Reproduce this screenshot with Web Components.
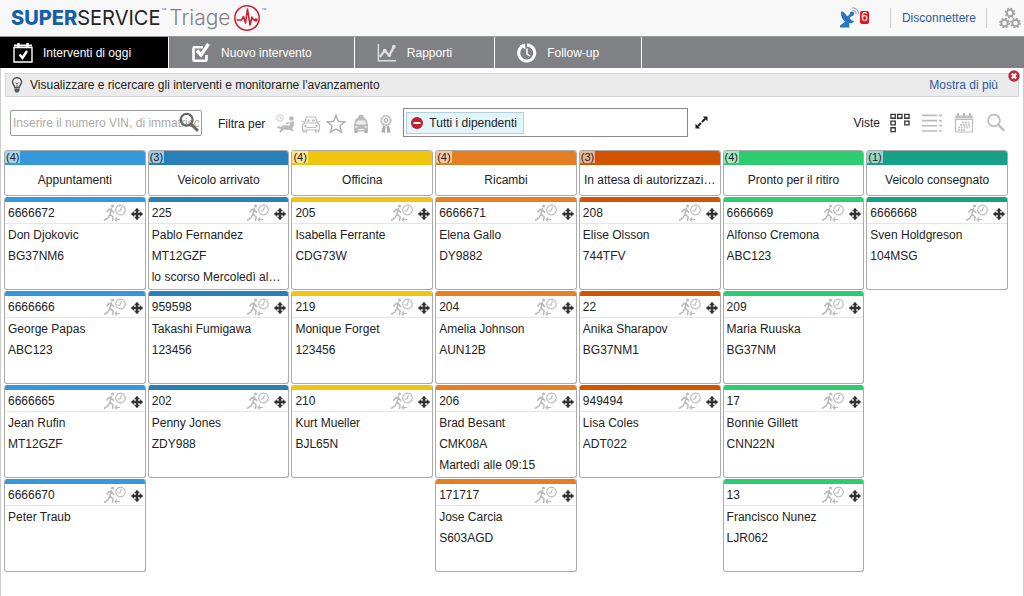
<!DOCTYPE html>
<html lang="it">
<head>
<meta charset="utf-8">
<meta name="viewport" content="width=device-width, initial-scale=1">
<title>Superservice Triage</title>
<style>
  body { margin: 0; background: #fff; color: #222; font: 12px/16px "Liberation Sans", Arial, sans-serif; }
</style>
</head>
<body>
<triage-app></triage-app>
<script>
const ICONS = {
  today: ['0 0 20 20', '<g fill="none" stroke="#fff"><path d="M1 4.5h18V19H1z" stroke-width="1.4"/><path d="M5.500 0v4M14.500 0v4" stroke-width="2.400"/><path d="M1 2.500h18" stroke-width="2"/><path d="M6.500 11.500l3 3.500 4.500-7" stroke-width="2.400"/></g>'],
  check: ['0 0 20 20', '<g fill="none" stroke="#fff" stroke-width="2.600"><path d="M12 4.300H3.500a1 1 0 0 0-1 1v11.400a1 1 0 0 0 1 1h11a1 1 0 0 0 1-1V12"/><path d="M6 7.500l4 4.500L17.500 1" stroke-width="3.400"/></g>'],
  chart: ['0 0 22 20', '<g fill="none" stroke="#ddd"><path d="M1.500 0v18.500H21" stroke-width="1.600"/><path d="M3 14.500l5.500-7 5 5 5-9" stroke-width="2.600"/></g><g fill="#ddd"><circle cx="8.500" cy="7.500" r="2.200"/><circle cx="13.500" cy="12.500" r="2"/><circle cx="18.500" cy="3" r="2.200"/></g>'],
  history: ['0 0 20 20', '<path d="M4.500 3.900A8 8 0 1 0 10 2" fill="none" stroke="#fff" stroke-width="3"/><path d="M2.500 2.500L8 .500l.500 6z" fill="#fff"/><path d="M10 5.500v5.500l3 2" fill="none" stroke="#fff" stroke-width="1.500"/>'],
  bulb: ['0 0 12 16', '<path d="M3.800 10.500C3.800 8.500 1.500 7.800 1.500 5a4.500 4.300 0 0 1 9 0c0 2.800-2.300 3.500-2.300 5.500z" fill="#eee" stroke="#555" stroke-width="1.500"/><path d="M4.500 5.500L6 7l1.500-1.500M6 7v3" fill="none" stroke="#777"/><path d="M3.500 11.500h5v2.500L7 15.500H5L3.500 14z" fill="#555"/>'],
  search: ['0 0 20 20', '<circle cx="7.700" cy="7.700" r="5.900" fill="none" stroke="currentColor" stroke-width="2.200"/><path d="M12.200 12.200l5.800 5.800" stroke="currentColor" stroke-width="3" stroke-linecap="round"/>'],
  find: ['0 0 20 20', '<circle cx="8" cy="7.500" r="5.900" fill="none" stroke="currentColor" stroke-width="1.700"/><path d="M12.500 12l5 5" stroke="currentColor" stroke-width="2.400" stroke-linecap="round"/>'],
  waiting: ['0 0 20 20', '<g fill="none" stroke="#bbb"><circle cx="4" cy="4" r="3.300" stroke="#ccc"/><path d="M4 2v2.300h2" stroke="#ccc"/><path d="M16 7.500c.500 3-.500 5.500-3 6.200L9 13" stroke-width="4"/><path d="M1.500 13l3.500 1 3-2 3 2.500M4 18l3-3.500 8 .500 2 2" stroke-width="2"/><path d="M9.500 9.500l4-.500" stroke-width="1.500"/></g><circle cx="15.500" cy="4.500" r="2.200" fill="#b5b5b5"/>'],
  car: ['0 0 20 20', '<g fill="none" stroke="#bbb" stroke-width="1.200"><path d="M3.500 9l2-6h9l2 6 2 2v5h-17v-5z"/><path d="M3.500 9h13M5.500 13.500h9M2.500 16v2h3V16M14.500 16v2h3V16M.500 7.500l3 .500M19.500 7.500l-3 .500"/></g><g fill="#bbb"><circle cx="4.500" cy="12" r="1.200"/><circle cx="15.500" cy="12" r="1.200"/><circle cx="7.500" cy="6.500" r="1.300"/><circle cx="12.500" cy="6.500" r="1.300"/></g>'],
  star: ['0 0 20 20', '<path d="M10 1.500l2.400 5.900 6.400.5-4.900 4.100 1.600 6.300L10 15l-5.500 3.300 1.600-6.300-4.900-4.100 6.400-.5z" fill="none" stroke="#aaa" stroke-width="1.400"/>'],
  taxi: ['0 0 20 20', '<path d="M7 3.500L8 1h4l1 2.500 2.500 2L17 11v6.500H3V11l1.500-5.500z" fill="#bbb"/><path d="M6 6.500h8l1 4H5z" fill="#eee"/><path d="M4 13h2.500M13.500 13H16M7 15.500h6" stroke="#fff" stroke-width="1.200"/><path d="M3.500 17h3v2h-3zM13.500 17h3v2h-3z" fill="#aaa"/>'],
  rosette: ['0 0 20 20', '<circle cx="10" cy="6.500" r="4.700" fill="none" stroke="#bbb" stroke-width="1.800" stroke-dasharray="2.600 .4"/><circle cx="10" cy="6.500" r="1.800" fill="none" stroke="#b0b0b0" stroke-width="1.300"/><path d="M7 11.500l2.500 1-.7 7-1.800-1.500-1.800 1zM13 11.500l-2.500 1 .7 7 1.800-1.500 1.800 1z" fill="#aaa"/>'],
  minus: ['0 0 12 12', '<circle cx="6" cy="6" r="6" fill="#c1202f"/><path d="M2.500 6h7" stroke="#fff" stroke-width="2"/>'],
  close: ['0 0 12 12', '<circle cx="6" cy="6" r="5.700" fill="#c1273a"/><path d="M3.800 3.500l4.400 5M8.200 3.500l-4.400 5" stroke="#fff" stroke-width="1.900"/>'],
  expand: ['0 0 14 14', '<path d="M13.500.500v5.200L8.300.500zM.500 13.500V8.300l5.200 5.200z" fill="#222"/><path d="M3 11l8-8" stroke="#222" stroke-width="2.200" stroke-dasharray="4.900 1.500"/>'],
  board: ['0 0 21 20', '<path d="M1 1h4.500v4H1zM8 1h4.500v4H8zM15.500 1H20v4h-4.500zM1 8h4.500v4H1zM15.500 8H20v4h-4.500zM1 15h4.500v4H1z" fill="none" stroke="#333" stroke-width="1.400"/>'],
  list: ['0 0 21 20', '<path d="M0 2h16M0 7.500h16M0 13h16M0 18.500h16M18 2h3M18 7.500h3M18 13h3M18 18.500h3" stroke="#bbb" stroke-width="1.600"/>'],
  month: ['0 0 20 20', '<path d="M1.500 6.500h17V19h-17z" fill="none" stroke="#bbb" stroke-width="1.200"/><path d="M1 2.500h18v3H1z" fill="#c4c4c4"/><path d="M4 0v4M10 0v4M16 0v4" stroke="#bbb" stroke-width="2"/><path d="M8 9.500h8M6 12h10M4 14.500h12M4 17h8" stroke="#ccc" stroke-width="1.800" stroke-dasharray="2 .7"/>'],
  gears: ['0 0 24 22', '<g fill="none" stroke="#a5a5a5"><g stroke-width="2"><circle cx="12" cy="6" r="3.200"/><circle cx="6.500" cy="16" r="3.200"/><circle cx="17.500" cy="16" r="3.200"/></g><g stroke-width="1.500" stroke-dasharray="1.900 1.700"><circle cx="12" cy="6" r="4.600"/><circle cx="6.500" cy="16" r="4.600"/><circle cx="17.500" cy="16" r="4.600"/></g></g>'],
  dish: ['0 0 22 22', '<path d="M2 4.500c3 0 3.500 1.500 5.500 4l2 2 3.500 3 2.500 1c-2 2-5 2.200-7.500 1.200C4 14 1.500 9.500 2 4.500z" fill="#2677bd"/><path d="M7 14L1 18.500v2h9.500L10 15z" fill="#2677bd"/><path d="M8.500 11l4.500-4" stroke="#2677bd" stroke-width="2.600"/><circle cx="13" cy="6.800" r="2.200" fill="#2677bd"/><path d="M13.500 3.500A3.500 3.500 0 0 1 17 7M13.500.800A6 6 0 0 1 19.700 7" fill="none" stroke="#8fa9c2" stroke-width="1.200"/>'],
  pulse: ['0 0 28 28', '<circle cx="14" cy="14" r="12.200" fill="none" stroke="#c8202f" stroke-width="1.500"/><path d="M3.500 16h5l2-3.500 2 6.500 2-14 2.500 16 2-8 1.500 3h3" fill="none" stroke="#c8202f" stroke-width="1.600" stroke-linejoin="round"/><circle cx="23" cy="16" r="1.700" fill="#c8202f"/>'],
  runner: ['0 0 24 18', '<g fill="none" stroke="#bbb"><path d="M8.500 4L7 10l3 3-.500 4M7 10l-2 4-4 2.500M3.500 8.500l2.500-3 2.500.500 2.500 3" stroke-width="1.600"/><circle cx="17.500" cy="6" r="4.800" stroke-width="1.200"/><path d="M18.500 3l-1.500 4h-2.500" stroke-width="1.100"/><path d="M12 15.500h5M14 13.500l-2 2 2 2" stroke-width="1.100"/></g><circle cx="9.500" cy="2" r="1.600" fill="#bbb"/>'],
  move: ['0 0 12 12', '<path d="M6 0l2.500 3H7v2h2V3.500L12 6 9 8.500V7H7v2h1.500L6 12 3.500 9H5V7H3v1.500L0 6l3-2.500V5h2V3H3.500z" fill="#333" stroke="#333" stroke-width=".4"/>']
};

const SHARED = `
  * { box-sizing: border-box; }
  button { font: inherit; color: inherit; padding: 0; margin: 0; border: 0; background: none; display: flex; cursor: pointer; }
  input { font: inherit; margin: 0; }
  a { color: #2a5c9e; text-decoration: none; }
`;

class Base extends HTMLElement {
  connectedCallback() {
    if (this.shadowRoot) return;
    this.attachShadow({ mode: 'open' }).innerHTML = `<style>${SHARED}</style>` + this.render();
  }
}

customElements.define('t-icon', class extends Base {
  render() {
    const [box, art] = ICONS[this.getAttribute('name')];
    return `<style>:host{display:block;flex:none;width:20px;height:20px} svg{display:block;width:100%;height:100%}</style>
      <svg viewBox="${box}" aria-hidden="true">${art}</svg>`;
  }
});

customElements.define('triage-header', class extends Base {
  render() {
    return `<style>
      :host { display: flex; align-items: center; height: 36px; padding: 0 2px 0 11px; background: #f8f8f8; }
      .logo { display: flex; align-items: center; font: 20px/36px Inter, sans-serif; color: #222; }
      b { color: #1760a8; font-weight: 800; }
      small { font-size: 8px; line-height: 8px; align-self: flex-start; padding: 7px 3px 0 1px; color: #777; }
      .name { color: #808285; font-weight: 300; font-size: 21px; }
      .pulse { width: 28px; height: 28px; margin-left: 2px; }
      nav { display: flex; align-items: center; margin-left: auto; }
      .alerts { position: relative; padding-right: 8px; }
      .alerts t-icon { width: 22px; height: 22px; }
      .badge { position: absolute; right: 0; top: 4px; padding: 0 1px; font-size: 12px; line-height: 13px; color: #fff; background: #e8101c; border-radius: 2px; }
      .out { margin: 0 11px 0 21px; padding: 2px 10px 2px 11px; border: solid #ccc; border-width: 0 1px; }
      .gears { width: 24px; height: 22px; }
    </style>
    <div class="logo"><b>SUPER</b><span>SERVICE</span><small>™</small><span class="name">Triage</span><t-icon class="pulse" name="pulse"></t-icon><small>™</small></div>
    <nav>
      <button class="alerts" aria-label="Notifiche"><t-icon name="dish"></t-icon><span class="badge">6</span></button>
      <span class="out"><a href="#">Disconnettere</a></span>
      <button aria-label="Impostazioni"><t-icon class="gears" name="gears"></t-icon></button>
    </nav>`;
  }
});

customElements.define('triage-tabs', class extends Base {
  render() {
    const tabs = [['today', 'Interventi di oggi'], ['check', 'Nuovo intervento'], ['chart', 'Rapporti'], ['history', 'Follow-up']];
    return `<style>
      :host { display: block; background: #808184; border-top: 1px solid #999; }
      nav { display: flex; }
      a { display: flex; align-items: center; gap: 10px; height: 31px; padding: 0 42px 0 22px; color: #fff; border-right: 1px solid #fff; }
      a[aria-current] { background: #000; padding: 0 37px 0 13px; }
    </style><nav>${tabs.map(([i, t], n) => `<a href="#"${n ? '' : ' aria-current="page"'}><t-icon name="${i}"></t-icon><span>${t}</span></a>`).join('')}</nav>`;
  }
});

customElements.define('triage-hint', class extends Base {
  render() {
    return `<style>
      :host { position: relative; display: flex; align-items: center; gap: 7px; height: 24px; margin: 5px 4px 0; padding: 0 20px 0 5px; background: #ebebeb; border: 1px solid #d4d4d4; }
      .bulb { width: 12px; height: 16px; }
      a { margin-left: auto; }
      .close { position: absolute; right: -2px; top: -4px; }
      .close t-icon { width: 12px; height: 12px; }
    </style>
    <t-icon class="bulb" name="bulb"></t-icon><slot></slot><a href="#">Mostra di più</a>
    <button class="close" aria-label="Chiudi"><t-icon name="close"></t-icon></button>`;
  }
});

customElements.define('triage-toolbar', class extends Base {
  render() {
    const filters = [['waiting', 'In attesa'], ['car', 'Auto sostitutiva'], ['star', 'Preferiti'], ['taxi', 'Taxi'], ['rosette', 'Garanzia']];
    const views = [['board', 'Schede'], ['list', 'Elenco'], ['month', 'Calendario'], ['find', 'Cerca']];
    return `<style>
      :host { display: flex; align-items: center; padding: 11px 17px 13px 9px; }
      .search { position: relative; flex: 0 1 192px; }
      .search input { display: block; width: 100%; height: 26px; padding: 0 2px; border: 1px solid #999; border-radius: 2px; background: #fff; }
      .search input::placeholder { color: #aaa; opacity: 1; }
      .search button { position: absolute; right: 3px; top: 2px; color: #666; }
      .label { margin: 2px 11px 0 16px; white-space: nowrap; }
      .filters { display: flex; gap: 5px; padding-top: 2px; }
      .staff { display: flex; align-items: center; flex: 0 1 285px; min-width: 150px; height: 29px; margin: 0 7px; padding: 0 2px; border: 1px solid #888; }
      .chip { display: flex; align-items: center; gap: 6px; flex: none; height: 22px; padding: 0 6px 0 4px; background: #e2f4fc; border: 1px solid #b5cfdc; }
      .chip t-icon { width: 12px; height: 12px; }
      .staff input { flex: 1; min-width: 0; border: 0; outline: 0; }
      .expand { width: 13px; height: 13px; }
      .views { display: flex; align-items: center; gap: 12px; margin-left: auto; color: #bbb; }
      .views span { color: #222; margin-right: -2px; }
    </style>
    <div class="search"><input id="q" type="text" aria-label="Cerca" placeholder="Inserire il numero VIN, di immatricolazione"><button aria-label="Cerca"><t-icon name="search"></t-icon></button></div>
    <span class="label">Filtra per</span>
    <div class="filters">${filters.map(([i, t]) => `<button aria-label="${t}"><t-icon name="${i}"></t-icon></button>`).join('')}</div>
    <div class="staff"><span class="chip"><button aria-label="Rimuovi"><t-icon name="minus"></t-icon></button>Tutti i dipendenti</span><input type="text" aria-label="Dipendenti"></div>
    <button aria-label="Espandi"><t-icon class="expand" name="expand"></t-icon></button>
    <div class="views"><span>Viste</span>${views.map(([i, t]) => `<button aria-label="${t}"><t-icon name="${i}"></t-icon></button>`).join('')}</div>`;
  }
});

customElements.define('job-card', class extends Base {
  render() {
    return `<style>
      :host { display: block; height: 93px; overflow: hidden; border: 1px solid #aaa; border-top: 0; border-radius: 3px; background: #fff; }
      .top { display: flex; align-items: center; height: 27px; padding: 0 2px 0 3px; border-top: 5px solid var(--tone); border-bottom: 1px solid #e6e6e6; }
      .run { width: 24px; height: 18px; margin-left: auto; }
      .move { width: 12px; height: 12px; margin: 3px 0 0 4px; }
      .body { padding: 1px 3px 0; line-height: 21px; }
      ::slotted(p) { margin: 0; overflow: hidden; white-space: nowrap; text-overflow: ellipsis; }
    </style>
    <div class="top"><span>${this.getAttribute('code')}</span><t-icon class="run" name="runner"></t-icon><button aria-label="Sposta"><t-icon class="move" name="move"></t-icon></button></div>
    <div class="body"><slot></slot></div>`;
  }
});

customElements.define('job-column', class extends Base {
  render() {
    return `<style>
      :host { display: flex; flex-direction: column; gap: 1px; min-width: 0; }
      header { overflow: hidden; border: 1px solid #aaa; border-radius: 3px; }
      .count { display: flex; height: 14px; background: var(--tone); line-height: 13px; font-size: 11px; }
      .count span { height: 12px; padding: 0 1px; background: #ffffff90; }
      h2 { margin: 0; padding: 0 1px; font: inherit; line-height: 30px; text-align: center; white-space: nowrap; overflow: hidden; }
    </style>
    <header><div class="count"><span>(${this.getAttribute('count')})</span></div><h2>${this.getAttribute('label')}</h2></header>
    <slot></slot>`;
  }
});

customElements.define('triage-board', class extends Base {
  render() {
    const columns = [
      ['Appuntamenti', '#3498db', [['6666672', 'Don Djokovic', 'BG37NM6'], ['6666666', 'George Papas', 'ABC123'], ['6666665', 'Jean Rufin', 'MT12GZF'], ['6666670', 'Peter Traub']]],
      ['Veicolo arrivato', '#2980b9', [['225', 'Pablo Fernandez', 'MT12GZF', 'lo scorso Mercoledì al…'], ['959598', 'Takashi Fumigawa', '123456'], ['202', 'Penny Jones', 'ZDY988']]],
      ['Officina', '#f1c40f', [['205', 'Isabella Ferrante', 'CDG73W'], ['219', 'Monique Forget', '123456'], ['210', 'Kurt Mueller', 'BJL65N']], 4],
      ['Ricambi', '#e67e22', [['6666671', 'Elena Gallo', 'DY9882'], ['204', 'Amelia Johnson', 'AUN12B'], ['206', 'Brad Besant', 'CMK08A', 'Martedì alle 09:15'], ['171717', 'Jose Carcia', 'S603AGD']]],
      ['In attesa di autorizzazi…', '#d35400', [['208', 'Elise Olsson', '744TFV'], ['22', 'Anika Sharapov', 'BG37NM1'], ['949494', 'Lisa Coles', 'ADT022']]],
      ['Pronto per il ritiro', '#2ecc71', [['6666669', 'Alfonso Cremona', 'ABC123'], ['209', 'Maria Ruuska', 'BG37NM'], ['17', 'Bonnie Gillett', 'CNN22N'], ['13', 'Francisco Nunez', 'LJR062']]],
      ['Veicolo consegnato', '#16a085', [['6666668', 'Sven Holdgreson', '104MSG']]]
    ];
    return `<style>
      :host { display: grid; grid-template-columns: repeat(7, minmax(0, 1fr)); gap: 2px; padding: 0 15px 24px 3px; }
    </style>${columns.map(([label, tone, jobs, count]) => `<job-column style="--tone:${tone}" label="${label}" count="${count || jobs.length}">${
      jobs.map(([code, ...lines]) => `<job-card code="${code}">${lines.map(l => `<p>${l}</p>`).join('')}</job-card>`).join('')}</job-column>`).join('')}`;
  }
});

customElements.define('triage-app', class extends Base {
  render() {
    return `<style>
      :host { display: flex; flex-direction: column; min-height: 100vh; }
      main { flex: 1; display: flex; flex-direction: column; border: solid #ccc; border-width: 0 1px; }
    </style>
    <triage-header></triage-header>
    <triage-tabs></triage-tabs>
    <main>
      <triage-hint>Visualizzare e ricercare gli interventi e monitorarne l'avanzamento</triage-hint>
      <triage-toolbar></triage-toolbar>
      <triage-board></triage-board>
    </main>`;
  }
});
</script>
</body>
</html>
